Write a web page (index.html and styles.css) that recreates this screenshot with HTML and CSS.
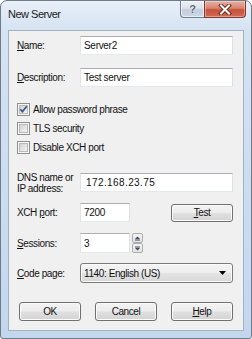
FILE: index.html
```html
<!DOCTYPE html>
<html>
<head>
<meta charset="utf-8">
<link rel="stylesheet" href="styles.css">
</head>
<body>
<div class="window">
  <div class="titlebar">
    <span class="title">New Server</span>
    <div class="caption">
      <div class="cbtn help"><span>?</span></div>
      <div class="cbtn close">
        <svg width="14" height="11" viewBox="0 0 14 11"><path d="M3 1.5 L11 9.5 M11 1.5 L3 9.5" stroke="#6a2a20" stroke-width="4" stroke-linecap="square"/><path d="M3 1.5 L11 9.5 M11 1.5 L3 9.5" stroke="#fff" stroke-width="2" stroke-linecap="square"/></svg>
      </div>
    </div>
  </div>
  <div class="client">
    <div class="row r-name">
      <span class="lbl"><u>N</u>ame:</span>
      <div class="input wide">Server2</div>
    </div>
    <div class="row r-desc">
      <span class="lbl"><u>D</u>escription:</span>
      <div class="input wide">Test server</div>
    </div>
    <div class="row r-check first">
      <svg class="cb" width="13" height="13" viewBox="0 0 13 13"><defs><linearGradient id="g1" x1="0" y1="0" x2="1" y2="1"><stop offset="0" stop-color="#cfcfcf"/><stop offset="1" stop-color="#f6f6f6"/></linearGradient></defs><rect x="0.5" y="0.5" width="12" height="12" fill="#f7f7f7" stroke="#8f8f8f"/><rect x="2.5" y="2.5" width="8" height="8" fill="url(#g1)" stroke="#b9b9b9"/><path d="M3.3 6.2 L5.4 8.6 L9.8 3.2" fill="none" stroke="#3d5694" stroke-width="1.7"/></svg>
      <span class="cbl">Allow password phrase</span>
    </div>
    <div class="row r-check">
      <svg class="cb" width="13" height="13" viewBox="0 0 13 13"><rect x="0.5" y="0.5" width="12" height="12" fill="#f7f7f7" stroke="#8f8f8f"/><rect x="2.5" y="2.5" width="8" height="8" fill="url(#g1)" stroke="#b9b9b9"/></svg>
      <span class="cbl">TLS security</span>
    </div>
    <div class="row r-check">
      <svg class="cb" width="13" height="13" viewBox="0 0 13 13"><rect x="0.5" y="0.5" width="12" height="12" fill="#f7f7f7" stroke="#8f8f8f"/><rect x="2.5" y="2.5" width="8" height="8" fill="url(#g1)" stroke="#b9b9b9"/></svg>
      <span class="cbl">Disable XCH port</span>
    </div>
    <div class="row r-dns">
      <span class="lbl two">DNS name or<br>IP address:</span>
      <div class="input wide ip">172.168.23.75</div>
    </div>
    <div class="row r-port">
      <span class="lbl">XCH <u>p</u>ort:</span>
      <div class="input num">7200</div>
      <div class="btn test"><span><u>T</u>est</span></div>
    </div>
    <div class="row r-sess">
      <span class="lbl"><u>S</u>essions:</span>
      <div class="input num">3</div>
      <div class="spin">
        <div class="sbtn"><svg width="7" height="5" viewBox="0 0 7 5"><path d="M3.5 0.5 L6 3 L1 3 Z" fill="#3b4a63"/><rect x="1" y="3.5" width="5" height="1" fill="#3b4a63"/></svg></div>
        <div class="sbtn"><svg width="7" height="5" viewBox="0 0 7 5"><rect x="1" y="0.5" width="5" height="1" fill="#3b4a63"/><path d="M1 2 L6 2 L3.5 4.5 Z" fill="#3b4a63"/></svg></div>
      </div>
    </div>
    <div class="row r-code">
      <span class="lbl"><u>C</u>ode page:</span>
      <div class="select wide">
        <span>1140: English (US)</span>
        <svg width="7" height="4" viewBox="0 0 7 4"><path d="M0 0 L7 0 L3.5 4 Z" fill="#000"/></svg>
      </div>
    </div>
    <div class="row r-btns">
      <div class="btn"><span>OK</span></div>
      <div class="btn"><span>Cancel</span></div>
      <div class="btn"><span><u>H</u>elp</span></div>
    </div>
  </div>
</div>
</body>
</html>
```
FILE: styles.css
```css
* { box-sizing: border-box; margin: 0; padding: 0; }
html, body { width: 252px; height: 339px; overflow: hidden; background: #fff; }
body {
  font-family: "Liberation Sans", Arial, sans-serif;
  font-size: 10px;
  letter-spacing: -0.4px;
  color: #111;
}
u { text-decoration: underline; text-underline-offset: 1px; }

.window {
  width: 252px;
  height: 339px;
  border: 1px solid #6f7b89;
  border-radius: 7px 7px 3px 3px;
  background: linear-gradient(180deg, #e8f0f9 0, #d6e3f2 28px, #c2d7ee 100%);
  display: flex;
  flex-direction: column;
}

.titlebar {
  height: 29px;
  flex: none;
  display: flex;
  align-items: flex-start;
}
.title {
  font-size: 11px;
  line-height: 13px;
  letter-spacing: -0.5px;
  margin: 7px 0 0 7px;
  color: #1b1b1b;
}
.caption {
  margin-left: auto;
  margin-right: 5px;
  display: flex;
}
.cbtn {
  height: 17px;
  display: flex;
  align-items: center;
  justify-content: center;
}
.help {
  width: 24px;
  border: 1px solid #6f7f92;
  border-top: none;
  border-right: none;
  border-radius: 0 0 0 4px;
  background: linear-gradient(180deg, #eef2f7 0, #dae2ec 45%, #c3cedc 55%, #ccd8e6 100%);
  box-shadow: inset 0 0 0 1px rgba(255,255,255,0.6);
}
.help span {
  font-size: 11px;
  font-weight: bold;
  color: #5a6472;
  letter-spacing: 0;
  text-shadow: 0 0 1px #fff, 0 0 1px #fff;
}
.close {
  width: 42px;
  border: 1px solid #7d3a2f;
  border-top: none;
  border-radius: 0 0 4px 0;
  background: linear-gradient(180deg, #e8b0a2 0, #d88570 45%, #c8503a 55%, #d46a52 100%);
  box-shadow: inset 0 0 0 1px rgba(255,255,255,0.35);
}

.client {
  margin: 0 7px;
  height: 301px;
  flex: none;
  background: #f0f0f0;
  border: 1px solid #a3b1c2;
  display: flex;
  flex-direction: column;
}

.row {
  display: flex;
  align-items: center;
  padding: 0 10px 0 8px;
  flex: none;
}
.lbl { width: 63px; flex: none; }
.lbl.two { align-self: flex-start; line-height: 11px; margin-top: -1px; }

.r-name { margin-top: 5px; height: 19px; }
.r-desc { margin-top: 13px; height: 19px; }
.r-check { margin-top: 6px; height: 13px; }
.r-check.first { margin-top: 16px; }
.r-dns { margin-top: 19px; height: 19px; }
.r-port { margin-top: 11px; height: 19px; }
.r-sess { margin-top: 11px; height: 20px; }
.r-code { margin-top: 10px; height: 20px; }
.r-btns { margin-top: 19px; height: 19px; padding-left: 10px; justify-content: space-between; }

.cb { flex: none; margin-right: 3px; }

.input {
  height: 100%;
  background: #fff;
  border: 1px solid;
  border-color: #abadb3 #dbdfe6 #e3e9ef #e2e3ea;
  padding-left: 3px;
  display: flex;
  align-items: center;
  letter-spacing: -0.3px;
}
.wide { width: 153px; }
.num { width: 50px; }
.ip { letter-spacing: 0.4px; padding-left: 5px; }

.btn {
  width: 62px;
  height: 19px;
  border: 1px solid #707070;
  border-radius: 3px;
  background: linear-gradient(180deg, #f3f3f3 0, #ececec 48%, #e0e0e0 52%, #d3d3d3 100%);
  box-shadow: inset 0 0 0 1px #fbfbfb;
  display: flex;
  align-items: center;
  justify-content: center;
}
.test { margin-left: auto; height: 18px; }

.spin {
  margin-left: 2px;
  width: 11px;
  height: 20px;
  display: flex;
  flex-direction: column;
}
.sbtn {
  height: 10px;
  border: 1px solid #acacac;
  border-radius: 2px;
  background: linear-gradient(180deg, #f4f4f4, #e2e2e2);
  display: flex;
  align-items: center;
  justify-content: center;
}

.select {
  height: 100%;
  border: 1px solid #7a7a7a;
  border-radius: 3px;
  background: linear-gradient(180deg, #f4f4f4 0, #eeeeee 48%, #e3e3e3 52%, #d9d9d9 100%);
  box-shadow: inset 0 0 0 1px #fbfbfb;
  display: flex;
  align-items: center;
  justify-content: space-between;
  padding: 0 6px 0 3px;
}
```
